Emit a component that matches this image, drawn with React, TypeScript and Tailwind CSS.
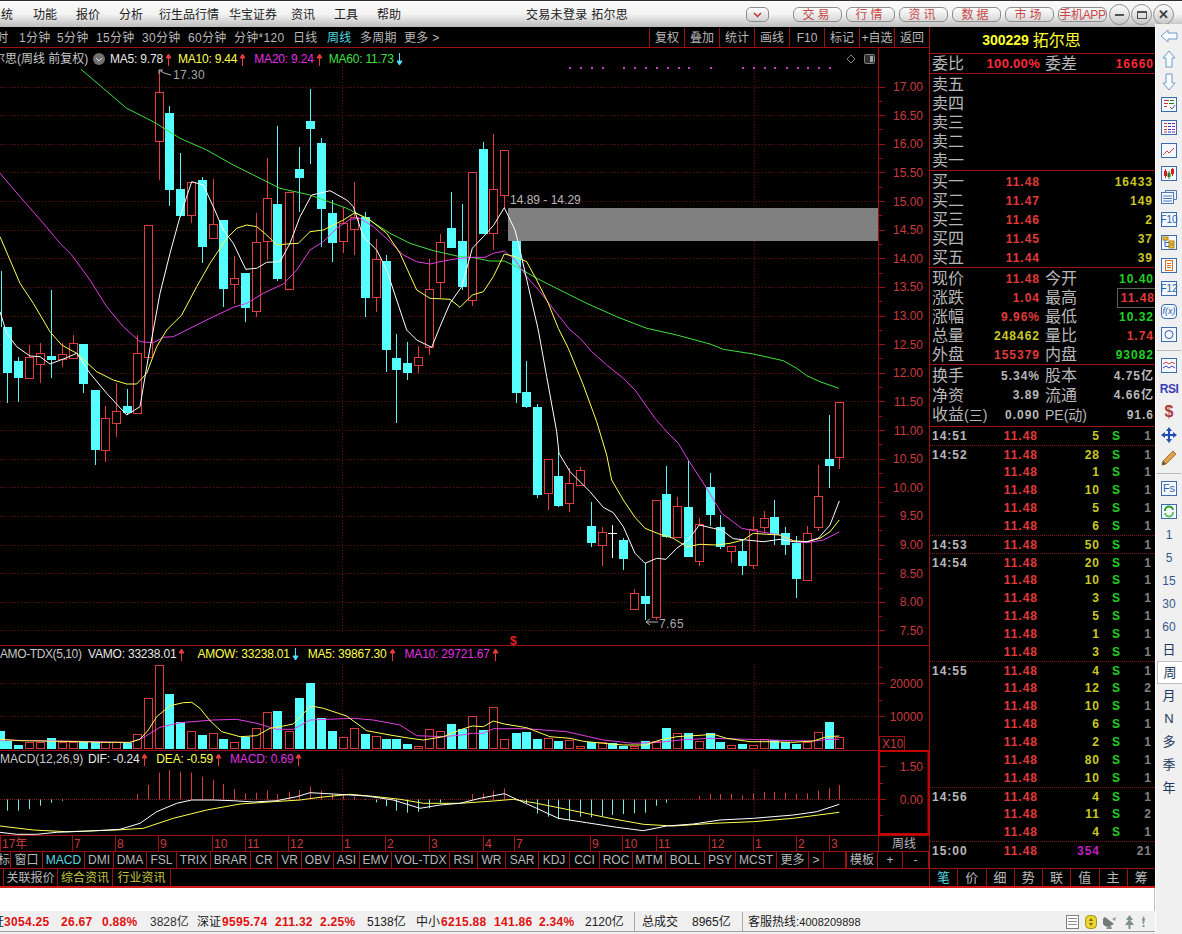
import React from 'react';

// All chart coordinates were read off 3x crops, so they are kept in crop units and scaled here.
const pts = (ox: number, oy: number, a: number[]) => {
  const out: string[] = [];
  for (let i = 0; i < a.length; i += 2) out.push(`${(ox + a[i] / 3).toFixed(1)},${(oy + a[i + 1] / 3).toFixed(1)}`);
  return out;
};

type Candle = [number, number, number, number, number, 'c' | 'r' | 'w'];

// x, wick top, body top, body bottom, wick bottom, kind
const CANDLES_A: Candle[] = [
  [2, 632, 795, 795, 800, 'c'], [22, 800, 800, 940, 1030, 'c'], [55, 890, 903, 953, 1025, 'c'], [88, 855, 892, 955, 955, 'r'],
  [121, 850, 880, 912, 970, 'r'], [152, 690, 888, 900, 955, 'c'], [185, 850, 883, 899, 922, 'r'], [218, 825, 850, 895, 895, 'r'],
  [250, 852, 852, 972, 1000, 'c'], [284, 990, 990, 1170, 1215, 'c'], [314, 1038, 1075, 1170, 1206, 'r'], [347, 968, 1053, 1090, 1130, 'r'],
  [380, 988, 1038, 1060, 1065, 'c'], [412, 825, 880, 1060, 1060, 'r'], [445, 495, 495, 892, 892, 'r'], [476, 30, 97, 245, 360, 'r'],
  [508, 138, 160, 390, 438, 'c'], [541, 280, 388, 468, 470, 'c'], [574, 365, 367, 467, 490, 'r'], [607, 352, 360, 560, 608, 'c'],
  [640, 357, 492, 533, 533, 'r'], [670, 480, 480, 686, 740, 'c'], [703, 588, 655, 673, 732, 'r'], [736, 640, 640, 743, 785, 'c'],
  [769, 460, 545, 752, 772, 'r'], [802, 295, 415, 545, 600, 'r'], [832, 198, 432, 657, 662, 'c'], [866, 397, 397, 688, 688, 'r'],
  [898, 262, 327, 353, 455, 'c'], [931, 88, 183, 207, 312, 'c'], [964, 235, 250, 446, 562, 'c'], [995, 420, 460, 548, 605, 'c'],
  [1028, 440, 490, 545, 580, 'r'], [1061, 365, 472, 508, 585, 'r'], [1094, 455, 470, 713, 772, 'c'], [1127, 538, 597, 710, 755, 'r'],
  [1157, 585, 603, 870, 935, 'c'], [1189, 822, 895, 930, 1088, 'c'], [1222, 847, 910, 938, 960, 'c'], [1255, 858, 892, 916, 940, 'r'],
  [1288, 598, 688, 862, 885, 'r'], [1319, 522, 545, 664, 715, 'r'], [1352, 397, 505, 563, 565, 'c'],
];

const CANDLES_B: Candle[] = [
  [5, 432, 543, 680, 690, 'c'], [37, 337, 337, 720, 738, 'r'], [70, 245, 267, 521, 521, 'c'], [100, 222, 388, 520, 570, 'r'],
  [133, 270, 270, 404, 445, 'r'], [167, 500, 500, 998, 1030, 'c'], [199, 903, 996, 1040, 1045, 'c'],
];

const CANDLES_C: Candle[] = [
  [232, 12, 21, 285, 293, 'c'], [265, 177, 177, 278, 330, 'r'], [295, 155, 228, 318, 320, 'c'], [328, 205, 250, 311, 335, 'r'],
  [361, 200, 211, 257, 257, 'r'], [394, 305, 378, 430, 440, 'c'], [427, 380, 397, 436, 498, 'r'], [457, 375, 400, 401, 473, 'w'],
  [490, 415, 420, 476, 510, 'c'], [523, 568, 580, 628, 628, 'r'], [556, 490, 588, 611, 660, 'c'], [589, 300, 300, 650, 660, 'r'],
  [619, 198, 282, 410, 415, 'c'], [652, 292, 319, 413, 413, 'r'], [685, 180, 321, 470, 470, 'c'], [718, 353, 373, 484, 497, 'r'],
  [751, 220, 261, 344, 378, 'c'], [781, 345, 381, 440, 448, 'c'], [814, 439, 439, 455, 490, 'r'], [847, 420, 453, 497, 524, 'c'],
  [880, 352, 388, 496, 508, 'r'], [913, 333, 355, 382, 400, 'r'], [943, 300, 351, 402, 436, 'c'], [976, 380, 400, 434, 465, 'c'],
  [1009, 408, 428, 537, 593, 'c'], [1042, 378, 400, 542, 542, 'r'], [1075, 195, 289, 383, 393, 'r'], [1108, 45, 177, 197, 263, 'c'],
  [1138, 6, 6, 172, 206, 'r'],
];

const MA5 = [
  ...pts(0, 60, [0, 755, 20, 820, 50, 860, 90, 888, 120, 890, 150, 912, 200, 893, 230, 880, 270, 940, 320, 1000, 380, 1065, 420, 1040, 440, 920, 460, 810, 480, 700, 510, 580, 540, 470, 575, 365, 610, 375, 640, 440, 670, 510, 700, 550, 737, 628, 770, 625, 800, 607, 840, 605, 870, 550, 900, 470, 935, 405, 990, 392, 1040, 420, 1060, 440, 1090, 530, 1130, 570, 1160, 630, 1190, 720, 1220, 810, 1250, 840, 1295, 862, 1320, 800, 1350, 730]),
  ...pts(460, 60, [5, 680, 37, 565, 70, 530, 100, 497, 133, 443, 165, 510, 180, 570, 205, 680, 235, 810, 260, 950]),
  ...pts(460, 400, [290, 95, 297, 160, 330, 215, 390, 275, 430, 322, 460, 338, 490, 380, 525, 460, 555, 490, 590, 475, 618, 478, 650, 445, 685, 420, 718, 375, 760, 385, 785, 390, 820, 416, 860, 420, 910, 425, 960, 418, 1000, 425, 1042, 425, 1075, 415, 1110, 375, 1138, 303]),
].join(' ');

const MA10 = [
  ...pts(0, 60, [0, 530, 30, 600, 60, 670, 100, 730, 150, 815, 185, 855, 230, 880, 290, 935, 340, 960, 380, 972, 410, 972, 440, 940, 470, 860, 500, 810, 545, 765, 590, 680, 630, 610, 680, 535, 710, 505, 740, 495, 770, 500, 800, 525, 830, 555, 860, 552, 895, 550, 930, 515, 970, 510, 1030, 480, 1065, 458, 1110, 480, 1160, 520, 1200, 580, 1250, 690, 1290, 715, 1350, 718]),
  ...pts(460, 60, [0, 742, 37, 705, 70, 695, 100, 650, 133, 582, 165, 590, 200, 605, 230, 660, 265, 730, 295, 805, 325, 865, 370, 975]),
  ...pts(460, 400, [410, 65, 440, 165, 455, 240, 490, 300, 525, 352, 555, 385, 600, 403, 640, 415, 680, 440, 720, 433, 770, 435, 810, 430, 850, 420, 880, 400, 920, 403, 960, 405, 1000, 422, 1040, 425, 1080, 415, 1110, 395, 1138, 360]),
].join(' ');

const MA20 = [
  ...pts(0, 60, [0, 340, 60, 410, 130, 490, 180, 550, 215, 585, 270, 660, 320, 740, 370, 800, 420, 845, 460, 848, 490, 832, 520, 830, 570, 805, 630, 775, 700, 742, 740, 730, 790, 700, 850, 672, 890, 630, 930, 570, 970, 545, 1010, 505, 1050, 478, 1080, 475, 1120, 500, 1170, 545, 1210, 585, 1250, 605, 1290, 612, 1330, 603]),
  ...pts(460, 60, [0, 595, 37, 592, 75, 592, 100, 580, 133, 573, 165, 600, 200, 650, 240, 695, 290, 760, 330, 810, 360, 835, 395, 875, 440, 915, 490, 955, 525, 990]),
  ...pts(460, 400, [585, 55, 620, 95, 655, 130, 685, 180, 740, 265, 785, 340, 845, 385, 900, 395, 960, 405, 1005, 425, 1040, 428, 1090, 420, 1138, 396]),
].join(' ');

const MA60 = [
  ...pts(0, 60, [243, 28, 310, 85, 380, 145, 460, 185, 540, 235, 620, 270, 700, 315, 780, 355, 840, 385, 930, 405, 1040, 445, 1100, 475, 1170, 520, 1230, 550, 1300, 572]),
  ...pts(460, 60, [0, 590, 40, 593, 90, 603, 133, 603, 170, 620, 230, 655, 300, 690, 380, 730, 470, 770, 560, 805, 650, 825, 750, 852, 790, 868, 880, 882, 970, 902, 1010, 925, 1040, 947, 1080, 965, 1136, 985]),
].join(' ');

const VOL_A: [number, number, 'c' | 'r'][] = [
  [0, 272, 'c'], [22, 302, 'c'], [55, 315, 'c'], [88, 305, 'r'], [121, 305, 'r'], [152, 295, 'c'], [185, 307, 'r'], [218, 305, 'r'], [250, 307, 'c'], [284, 307, 'c'], [314, 307, 'r'], [347, 307, 'r'], [380, 308, 'c'], [412, 283, 'r'], [445, 175, 'r'], [476, 76, 'r'], [508, 162, 'c'], [541, 247, 'c'], [574, 274, 'r'], [607, 286, 'c'], [640, 280, 'r'], [670, 297, 'c'], [703, 305, 'r'], [736, 292, 'c'], [769, 265, 'r'], [802, 217, 'r'], [832, 213, 'c'], [866, 272, 'r'], [898, 174, 'c'], [931, 130, 'c'], [964, 234, 'c'], [995, 273, 'c'], [1028, 292, 'r'], [1061, 265, 'r'], [1094, 282, 'c'], [1127, 287, 'r'], [1157, 297, 'c'], [1189, 297, 'c'], [1222, 312, 'c'], [1255, 319, 'r'], [1288, 268, 'r'], [1319, 274, 'r'], [1352, 252, 'c'],
];

const VOL_B: [number, number, 'c' | 'r'][] = [
  [5, 268, 'c'], [37, 229, 'r'], [70, 270, 'c'], [100, 202, 'r'], [133, 298, 'r'], [167, 279, 'c'], [199, 275, 'c'], [232, 297, 'c'], [265, 295, 'r'], [295, 303, 'c'], [328, 301, 'r'], [361, 319, 'r'], [394, 305, 'c'], [427, 307, 'r'], [457, 310, 'c'], [490, 318, 'c'], [523, 319, 'r'], [556, 303, 'c'], [589, 302, 'r'], [619, 265, 'c'], [652, 278, 'r'], [685, 280, 'c'], [718, 304, 'r'], [751, 280, 'c'], [781, 306, 'c'], [814, 314, 'r'], [847, 312, 'c'], [880, 316, 'r'], [913, 296, 'r'], [943, 299, 'c'], [976, 307, 'c'], [1009, 311, 'c'], [1042, 305, 'r'], [1075, 275, 'r'], [1108, 247, 'c'], [1138, 292, 'r'],
];

const VOL_YELLOW = [
  ...pts(0, 640, [0, 298, 60, 302, 120, 303, 240, 305, 300, 307, 390, 307, 420, 298, 445, 270, 470, 230, 510, 197, 550, 188, 575, 187, 600, 205, 630, 242, 665, 275, 720, 290, 770, 287, 810, 265, 850, 258, 880, 252, 910, 220, 935, 198, 970, 205, 1040, 228, 1100, 272, 1170, 285, 1230, 295, 1270, 300, 1330, 290]),
  ...pts(460, 640, [5, 268, 37, 258, 70, 260, 100, 243, 133, 252, 200, 263, 270, 290, 330, 295, 370, 304, 430, 310, 490, 315, 556, 315, 600, 300, 650, 290, 720, 286, 760, 283, 800, 295, 870, 305, 930, 305, 1000, 307, 1060, 303, 1100, 290, 1138, 288]),
].join(' ');

const VOL_MAGENTA = [
  ...pts(0, 640, [0, 300, 120, 302, 300, 305, 390, 308, 430, 293, 480, 262, 540, 248, 640, 240, 710, 238, 770, 250, 830, 268, 880, 268, 930, 240, 1060, 235, 1120, 240, 1200, 255, 1250, 287, 1330, 290]),
  ...pts(460, 640, [5, 285, 37, 280, 70, 280, 100, 266, 200, 266, 320, 275, 430, 300, 520, 310, 600, 307, 660, 300, 750, 295, 860, 298, 1000, 302, 1060, 303, 1108, 298, 1138, 298]),
].join(' ');

// x, bar end; the zero line is at 478 in crop units
const MACD_A: [number, number][] = [
  [22, 512], [55, 512], [88, 507], [121, 497], [152, 488], [185, 482], [412, 462], [445, 435], [476, 398], [508, 390], [541, 395], [574, 398], [607, 410], [640, 420], [670, 432], [703, 447], [736, 460], [769, 458], [802, 452], [832, 462], [866, 455], [898, 450], [931, 440], [964, 452], [995, 462], [1028, 465], [1061, 470], [1094, 480], [1127, 487], [1157, 498], [1189, 512], [1222, 518], [1255, 515], [1288, 505], [1319, 488],
];

const MACD_B: [number, number][] = [
  [37, 462], [70, 460], [100, 452], [133, 445], [199, 490], [232, 520], [265, 530], [295, 538], [328, 540], [361, 530], [394, 532], [427, 528], [457, 525], [490, 522], [523, 520], [556, 518], [589, 497], [619, 488], [718, 468], [751, 462], [781, 462], [814, 462], [847, 466], [880, 460], [913, 456], [943, 456], [976, 458], [1009, 462], [1042, 460], [1075, 452], [1108, 445], [1138, 435],
];

const DIF = [
  ...pts(0, 640, [0, 577, 50, 583, 110, 583, 170, 577, 270, 573, 360, 568, 420, 550, 470, 515, 530, 490, 575, 480, 640, 480, 700, 482, 760, 486, 830, 482, 890, 470, 930, 458, 1000, 462, 1100, 468, 1180, 480, 1260, 505, 1320, 495]),
  ...pts(460, 640, [0, 490, 60, 475, 133, 461, 170, 478, 230, 505, 295, 535, 380, 548, 470, 562, 550, 572, 620, 558, 700, 552, 780, 540, 880, 535, 1000, 525, 1070, 515, 1138, 493]),
].join(' ');

const DEA = [
  ...pts(0, 640, [0, 558, 100, 570, 200, 575, 350, 570, 430, 565, 520, 535, 620, 510, 720, 492, 820, 485, 900, 480, 960, 472, 1050, 463, 1130, 470, 1200, 478, 1270, 490]),
  ...pts(460, 640, [0, 490, 100, 483, 160, 478, 230, 490, 330, 510, 450, 535, 550, 553, 640, 558, 760, 550, 880, 545, 1000, 535, 1138, 517]),
].join(' ');

const PRICE_LABELS = ['17.00', '16.50', '16.00', '15.50', '15.00', '14.50', '14.00', '13.50', '13.00', '12.50', '12.00', '11.50', '11.00', '10.50', '10.00', '9.50', '9.00', '8.50', '8.00', '7.50'];
const SIGNAL_DOTS = [328, 360, 393, 427, 490, 522, 555, 588, 620, 653, 685, 750, 847, 880, 912, 943, 977, 1010, 1042, 1075, 1108];
const priceY = (i: number) => 86.5 + i * 28.63;

const RED_LINE = '#a01010';
const GRID = '#661212';
const AXIS_TEXT = 'text-[12px] fill-[#c83c3c]';

const CandleMark = ({ c, ox, oy }: { c: Candle; ox: number; oy: number }) => {
  const [x, hi, top, bottom, lo, kind] = c;
  const cx = Math.round(ox + x / 3);
  const y = (v: number) => oy + v / 3;
  const line = kind === 'c' ? '#55f5f5' : kind === 'w' ? '#ffffff' : '#e03c3c';
  if (kind === 'w') {
    return (
      <g stroke={line}>
        <line x1={cx + 0.5} x2={cx + 0.5} y1={y(hi)} y2={y(lo)} />
        <line x1={cx - 4} x2={cx + 5} y1={Math.round(y(top)) + 0.5} y2={Math.round(y(top)) + 0.5} />
      </g>
    );
  }
  return (
    <g stroke={line}>
      <line x1={cx + 0.5} x2={cx + 0.5} y1={y(hi)} y2={y(top)} />
      <line x1={cx + 0.5} x2={cx + 0.5} y1={y(bottom)} y2={y(lo)} />
      {kind === 'c' ? (
        <rect x={cx - 4} y={y(top)} width={9} height={(bottom - top) / 3} fill="#55ffff" stroke="none" />
      ) : (
        <rect x={cx - 3.5} y={Math.round(y(top)) + 0.5} width={8} height={Math.round((bottom - top) / 3)} fill="#000000" />
      )}
    </g>
  );
};

const VolBar = ({ x, top, kind, ox }: { x: number; top: number; kind: 'c' | 'r'; ox: number }) => {
  const cx = Math.round(ox + x / 3);
  const y = Math.round(640 + top / 3);
  return kind === 'c' ? (
    <rect x={cx - 4} y={y} width={9} height={749 - y} fill="#55ffff" />
  ) : (
    <rect x={cx - 3.5} y={y + 0.5} width={8} height={749 - y - 1} fill="#000000" stroke="#d83c3c" />
  );
};

const MacdBar = ({ x, end, ox }: { x: number; end: number; ox: number }) => {
  const cx = Math.round(ox + x / 3) + 0.5;
  return <line x1={cx} x2={cx} y1={799.5} y2={640 + end / 3} stroke={end < 478 ? '#d83c3c' : '#7fe8e0'} />;
};

const Arrow = ({ down }: { down?: boolean }) => (
  <svg width="7" height="13" viewBox="0 0 7 13" className="inline-block shrink-0">
    {down ? (
      <path d="M3.5 0V11M1 8L3.5 12L6 8Z" stroke="#55ddff" fill="#55ddff" />
    ) : (
      <path d="M3.5 13V2M1 5L3.5 1L6 5Z" stroke="#e83c3c" fill="#e83c3c" />
    )}
  </svg>
);

const PriceChart = () => (
  <svg width="929" height="597" viewBox="0 48 929 597" className="block overflow-visible">
    {PRICE_LABELS.map((_, i) => (
      <line key={i} x1={0} x2={878} y1={Math.round(priceY(i)) + 0.5} y2={Math.round(priceY(i)) + 0.5} stroke={GRID} strokeDasharray="1 2" />
    ))}
    <line x1={342.5} x2={342.5} y1={64} y2={632} stroke={GRID} strokeDasharray="1 2" />
    <line x1={754.5} x2={754.5} y1={64} y2={632} stroke={GRID} strokeDasharray="1 2" />
    <g shapeRendering="crispEdges">
      {CANDLES_A.map((c, i) => <CandleMark key={i} c={c} ox={0} oy={60} />)}
      {CANDLES_B.map((c, i) => <CandleMark key={i} c={c} ox={460} oy={60} />)}
      {CANDLES_C.map((c, i) => <CandleMark key={i} c={c} ox={460} oy={400} />)}
      <rect x={508} y={208} width={370} height={33} fill="#808080" />
    </g>
    <polyline points={MA60} fill="none" stroke="#40e040" />
    <polyline points={MA20} fill="none" stroke="#e040e0" />
    <polyline points={MA10} fill="none" stroke="#ffff50" />
    <polyline points={MA5} fill="none" stroke="#ffffff" />
    {SIGNAL_DOTS.map((x) => (
      <rect key={x} x={Math.round(460 + x / 3)} y={67} width={2} height={2} fill="#c040c0" />
    ))}
    <path d="M851 55L855 59L851 63L847 59Z" fill="none" stroke="#808080" />
    <rect x={864.5} y={54.5} width={10} height={9} rx={1} fill="#303030" stroke="#808080" />
    <rect x={870} y={56} width={3} height={6} fill="#a0a0a0" />
    <path d="M159 70H163M159 70V74M159 70L164 73L171 75" fill="none" stroke="#b0b0b0" />
    <text x={173} y={79} className="text-[12px] fill-[#a8a8a8]" letterSpacing="0.4">17.30</text>
    <text x={510} y={204} className="text-[12px] fill-[#b8b8b8]">14.89 - 14.29</text>
    <path d="M646 622H658M646 622L650 619M646 622L650 625" fill="none" stroke="#b0b0b0" />
    <text x={659} y={628} className="text-[12px] fill-[#a8a8a8]" letterSpacing="0.4">7.65</text>
    <text x={510} y={645} className="text-[12px] font-bold fill-[#e82020]">$</text>
    <line x1={878.5} x2={878.5} y1={48} y2={645} stroke={RED_LINE} />
    {PRICE_LABELS.map((label, i) => (
      <g key={label}>
        <line x1={879} x2={885} y1={Math.round(priceY(i)) + 0.5} y2={Math.round(priceY(i)) + 0.5} stroke={RED_LINE} />
        <line x1={879} x2={882} y1={Math.round(priceY(i) + 14.3) + 0.5} y2={Math.round(priceY(i) + 14.3) + 0.5} stroke={RED_LINE} />
        <text x={923} y={priceY(i) + 4.5} textAnchor="end" className={AXIS_TEXT}>{label}</text>
      </g>
    ))}
  </svg>
);

const VolumeChart = () => (
  <svg width="929" height="105" viewBox="0 645 929 105" className="block">
    <line x1={0} x2={878} y1={683.5} y2={683.5} stroke={GRID} strokeDasharray="1 2" />
    <line x1={0} x2={878} y1={716.5} y2={716.5} stroke={GRID} strokeDasharray="1 2" />
    <line x1={342.5} x2={342.5} y1={664} y2={750} stroke={GRID} strokeDasharray="1 2" />
    <line x1={754.5} x2={754.5} y1={664} y2={750} stroke={GRID} strokeDasharray="1 2" />
    <g shapeRendering="crispEdges">
      {VOL_A.map(([x, top, kind], i) => <VolBar key={i} x={x} top={top} kind={kind} ox={0} />)}
      {VOL_B.map(([x, top, kind], i) => <VolBar key={i} x={x} top={top} kind={kind} ox={460} />)}
    </g>
    <polyline points={VOL_MAGENTA} fill="none" stroke="#e040e0" />
    <polyline points={VOL_YELLOW} fill="none" stroke="#ffff50" />
    <line x1={878.5} x2={878.5} y1={645} y2={750} stroke={RED_LINE} />
    <line x1={879} x2={885} y1={683.5} y2={683.5} stroke={RED_LINE} />
    <line x1={879} x2={885} y1={716.5} y2={716.5} stroke={RED_LINE} />
    <line x1={879} x2={882} y1={700.5} y2={700.5} stroke={RED_LINE} />
    <line x1={879} x2={882} y1={667.5} y2={667.5} stroke={RED_LINE} />
    <text x={923} y={688} textAnchor="end" className={AXIS_TEXT}>20000</text>
    <text x={923} y={721} textAnchor="end" className={AXIS_TEXT}>10000</text>
    <rect x={879.5} y={736.5} width={25} height={14} fill="#000000" stroke={RED_LINE} />
    <text x={882} y={748} className="text-[12px] fill-[#c83c3c]">X10</text>
  </svg>
);

const MacdChart = () => (
  <svg width="929" height="85" viewBox="0 750 929 85" className="block">
    <line x1={0} x2={878} y1={799.5} y2={799.5} stroke="#801818" strokeDasharray="1 1" />
    <line x1={342.5} x2={342.5} y1={770} y2={835} stroke={GRID} strokeDasharray="1 2" />
    <line x1={754.5} x2={754.5} y1={770} y2={835} stroke={GRID} strokeDasharray="1 2" />
    {MACD_A.map(([x, end], i) => <MacdBar key={i} x={x} end={end} ox={0} />)}
    {MACD_B.map(([x, end], i) => <MacdBar key={i} x={x} end={end} ox={460} />)}
    <polyline points={DEA} fill="none" stroke="#ffff50" />
    <polyline points={DIF} fill="none" stroke="#ffffff" />
    <rect x={879} y={751} width={49.5} height={83} fill="#000000" stroke="#c80000" strokeWidth={2} />
    <line x1={880} x2={886} y1={766.5} y2={766.5} stroke={RED_LINE} />
    <line x1={880} x2={886} y1={799.5} y2={799.5} stroke={RED_LINE} />
    <line x1={880} x2={883} y1={783.5} y2={783.5} stroke={RED_LINE} />
    <line x1={880} x2={883} y1={815.5} y2={815.5} stroke={RED_LINE} />
    <text x={923} y={771} textAnchor="end" className={AXIS_TEXT}>1.50</text>
    <text x={923} y={804} textAnchor="end" className={AXIS_TEXT}>0.00</text>
  </svg>
);

const DATE_TICKS: [number, string][] = [[0, '17年'], [72, '7'], [115, '8'], [158, '9'], [212, '10'], [245, '11'], [288, '12'], [342, '1'], [385, '2'], [429, '3'], [483, '4'], [514, '7'], [590, '9'], [622, '10'], [656, '11'], [709, '12'], [753, '1'], [796, '2'], [829, '3']];

const DateAxis = () => (
  <svg width="878" height="16" viewBox="0 835 878 16" className="block">
    {DATE_TICKS.map(([x, label]) => (
      <g key={`${x}${label}`}>
        <line x1={x + 0.5} x2={x + 0.5} y1={835} y2={851} stroke={RED_LINE} />
        <text x={x + 2} y={847} className="text-[12px] fill-[#c83c3c]">{label}</text>
      </g>
    ))}
  </svg>
);

const MENU = [
  { label: '系统', cls: '-ml-[11px] w-[44px]' },
  { label: '功能', cls: 'w-[43px]' },
  { label: '报价', cls: 'w-[43px]' },
  { label: '分析', cls: 'w-[40px]' },
  { label: '衍生品行情', cls: 'w-[70px]' },
  { label: '华宝证券', cls: 'w-[62px]' },
  { label: '资讯', cls: 'w-[43px]' },
  { label: '工具', cls: 'w-[43px]' },
  { label: '帮助', cls: 'w-[43px]' },
];

const PERIODS = [
  { label: '分时', cls: '-ml-[16px] w-[35px]' },
  { label: '1分钟', cls: 'w-[38px]' },
  { label: '5分钟', cls: 'w-[39px]' },
  { label: '15分钟', cls: 'w-[46px]' },
  { label: '30分钟', cls: 'w-[46px]' },
  { label: '60分钟', cls: 'w-[46px]' },
  { label: '分钟*120', cls: 'w-[59px]' },
  { label: '日线', cls: 'w-[34px]' },
  { label: '周线', cls: 'w-[33px] text-[#54d8e0]' },
  { label: '多周期', cls: 'w-[44px]' },
  { label: '更多 >', cls: 'w-[40px]' },
];

const CHART_TOOLS = ['复权', '叠加', '统计', '画线', 'F10', '标记', '+自选', '返回'];

const INDICATORS = [
  { label: '标', cls: 'w-[11px] justify-end' },
  { label: '窗口', cls: 'w-[32px]' },
  { label: 'MACD', cls: 'w-[42px] text-[#54d8e0]' },
  { label: 'DMI', cls: 'w-[29px]' },
  { label: 'DMA', cls: 'w-[33px]' },
  { label: 'FSL', cls: 'w-[30px]' },
  { label: 'TRIX', cls: 'w-[34px]' },
  { label: 'BRAR', cls: 'w-[40px]' },
  { label: 'CR', cls: 'w-[27px]' },
  { label: 'VR', cls: 'w-[24px]' },
  { label: 'OBV', cls: 'w-[32px]' },
  { label: 'ASI', cls: 'w-[26px]' },
  { label: 'EMV', cls: 'w-[32px]' },
  { label: 'VOL-TDX', cls: 'w-[58px]' },
  { label: 'RSI', cls: 'w-[28px]' },
  { label: 'WR', cls: 'w-[28px]' },
  { label: 'SAR', cls: 'w-[33px]' },
  { label: 'KDJ', cls: 'w-[31px]' },
  { label: 'CCI', cls: 'w-[30px]' },
  { label: 'ROC', cls: 'w-[33px]' },
  { label: 'MTM', cls: 'w-[33px]' },
  { label: 'BOLL', cls: 'w-[39px]' },
  { label: 'PSY', cls: 'w-[31px]' },
  { label: 'MCST', cls: 'w-[41px]' },
  { label: '更多', cls: 'w-[32px]' },
  { label: '>', cls: 'w-[15px]' },
  { label: '', cls: 'w-[23px] border-r-2' },
  { label: '模板', cls: 'w-[31px]' },
  { label: '+', cls: 'w-[25px]' },
  { label: '-', cls: 'w-[26px]' },
];

const TRADES: { time?: string; vol: number; count: number }[] = [
  { time: '14:51', vol: 5, count: 1 }, { time: '14:52', vol: 28, count: 1 }, { vol: 1, count: 1 }, { vol: 10, count: 1 }, { vol: 5, count: 1 }, { vol: 6, count: 1 },
  { time: '14:53', vol: 50, count: 1 }, { time: '14:54', vol: 20, count: 1 }, { vol: 10, count: 1 }, { vol: 3, count: 1 }, { vol: 5, count: 1 }, { vol: 1, count: 1 }, { vol: 3, count: 1 },
  { time: '14:55', vol: 4, count: 1 }, { vol: 12, count: 2 }, { vol: 10, count: 1 }, { vol: 6, count: 1 }, { vol: 2, count: 1 }, { vol: 80, count: 1 }, { vol: 10, count: 1 },
  { time: '14:56', vol: 4, count: 1 }, { vol: 11, count: 2 }, { vol: 4, count: 1 },
];

const NUM = 'font-bold text-[12px] tracking-[1px]';
const RED = 'text-[#e03a3a]';
const YELLOW = 'text-[#c8c828]';
const GREEN = 'text-[#20d020]';
const GREY = 'text-[#b8b8b8]';

const Cn = ({ children, cls = '' }: { children: React.ReactNode; cls?: string }) => (
  <span className={`text-[16px] leading-[19px] text-[#b8b8b8] ${cls}`}>{children}</span>
);

const QuoteRow = ({ a, av, ac, b, bv, bc, boxed }: { a: React.ReactNode; av: string; ac: string; b: React.ReactNode; bv: string; bc: string; boxed?: boolean }) => (
  <div className="flex h-[19px] items-center">
    <div className="flex w-[110px] items-center justify-between pl-[2px]">
      <Cn>{a}</Cn>
      <span className={`${NUM} ${ac}`}>{av}</span>
    </div>
    <div className="ml-[5px] flex w-[110px] items-center justify-between">
      <Cn>{b}</Cn>
      {boxed ? (
        <span className={`${NUM} ${bc} -mr-[2px] border border-[#606060] pr-[1px] pl-[3px]`}>{bv}</span>
      ) : (
        <span className={`${NUM} ${bc} pr-[1px]`}>{bv}</span>
      )}
    </div>
  </div>
);

const LevelRow = ({ label, price, qty }: { label: string; price?: string; qty?: string }) => (
  <div className="flex h-[19px] items-center pl-[2px]">
    <Cn cls="w-[58px]">{label}</Cn>
    <span className={`${NUM} ${RED} w-[50px] text-right`}>{price}</span>
    <span className={`${NUM} ${YELLOW} w-[113px] text-right`}>{qty}</span>
  </div>
);

const TradeRow = ({ time, vol, count, first }: { time?: string; vol: number; count: number; first: boolean }) => (
  <div className={`flex h-[18px] items-center ${time && !first ? 'border-t border-dotted border-[#801818]' : ''}`}>
    <span className={`${NUM} ${GREY} w-[60px] pl-[2px]`}>{time}</span>
    <span className={`${NUM} ${RED} w-[48px] text-right`}>11.48</span>
    <span className={`${NUM} ${YELLOW} w-[62px] text-right`}>{vol}</span>
    <span className={`${NUM} ${GREEN} w-[32px] text-center tracking-normal`}>S</span>
    <span className={`${NUM} text-[#808080] w-[20px] text-right`}>{count}</span>
  </div>
);

const LegendItem = ({ text, cls, arrow }: { text: string; cls: string; arrow: 'up' | 'down' }) => (
  <span className={`flex items-center gap-[2px] tracking-[-0.2px] ${cls}`}>
    {text}
    <Arrow down={arrow === 'down'} />
  </span>
);

const TitleButton = ({ label, cls = 'tracking-[3px]' }: { label: string; cls?: string }) => (
  <div className={`flex h-[15px] w-[49px] items-center justify-center rounded-[6px] border border-[#8c8c8c] bg-linear-to-b from-[#ffffff] to-[#d8d8d8] text-[12px] text-[#c84848] ${cls}`}>
    {label}
  </div>
);

const WindowButton = ({ children }: { children: React.ReactNode }) => (
  <div className="flex size-[21px] items-center justify-center rounded-full border border-[#8c8c8c] bg-linear-to-b from-[#ffffff] to-[#c8c8c8]">
    {children}
  </div>
);

const BlockArrow = ({ d }: { d: string }) => (
  <svg width="20" height="18" viewBox="0 0 20 18"><path d={d} fill="#f8fbff" stroke="#6e9ccc" /></svg>
);

const Box = ({ children, cls = 'rounded-none' }: { children: React.ReactNode; cls?: string }) => (
  <div className={`flex h-[15px] w-[16px] items-center justify-center border border-[#3a6cb4] bg-[#f4f8ff] text-[#2f5fae] ${cls}`}>{children}</div>
);

const Glyph = ({ children }: { children: React.ReactNode }) => (
  <svg width="14" height="13" viewBox="0 0 14 13">{children}</svg>
);

const TOOL_ICONS: React.ReactNode[] = [
  <BlockArrow d="M2 9L9 3V6H18V12H9V15Z" />,
  <BlockArrow d="M10 1L16 8H13V17H7V8H4Z" />,
  <BlockArrow d="M10 17L16 10H13V1H7V10H4Z" />,
  <Box><Glyph><path d="M2 2.5H7M2 5.5H6M2 8.5H5" stroke="#d03030" /><path d="M8 2.5H12M7 5.5H12" stroke="#208020" /><path d="M8 9L10 11L13 7" stroke="#606060" fill="none" /></Glyph></Box>,
  <Box><Glyph><path d="M2 2.5H5M2 5.5H5M2 8.5H5M2 11H5" stroke="#d03030" /><path d="M6 2.5H9M6 5.5H9M6 8.5H9M6 11H9" stroke="#3030c0" /><path d="M10 2.5H13M10 5.5H13M10 8.5H13M10 11H13" stroke="#a02090" /></Glyph></Box>,
  <Box><Glyph><path d="M1 11L5 7L7 9L12 4" stroke="#d04040" fill="none" /></Glyph></Box>,
  <Box><Glyph><path d="M3.5 2V11M10.5 1V9" stroke="#d02020" /><path d="M7 4V12" stroke="#208020" /><rect x="2" y="4" width="3" height="5" fill="#d02020" /><rect x="5.5" y="6" width="3" height="4" fill="#208020" /><rect x="9" y="2" width="3" height="5" fill="#d02020" /></Glyph></Box>,
  <svg width="18" height="16" viewBox="0 0 18 16"><path d="M5.5 3.5V1.5H16.5V10.5H14" fill="none" stroke="#4a78b8" /><rect x="1.5" y="3.5" width="12" height="11" fill="#f4f8ff" stroke="#4a78b8" /><path d="M3 7H12M3 9.5H12M3 12H12" stroke="#4a78b8" /></svg>,
  <Box><span className="text-[10px] leading-none">F10</span></Box>,
  <Box><Glyph><rect x="1" y="1" width="5" height="3" fill="#f0c030" stroke="#b08010" /><rect x="7" y="5" width="5" height="3" fill="#f0c030" stroke="#b08010" /><rect x="7" y="9" width="5" height="3" fill="#f0c030" stroke="#b08010" /><path d="M3 4V10.5H7M3 6.5H7" stroke="#3a6cb4" fill="none" /></Glyph></Box>,
  <Box><Glyph><rect x="3.5" y="1.5" width="7" height="10" fill="#ffffff" stroke="#e07020" /><path d="M5 4.5H9M5 6.5H9M5 8.5H9" stroke="#e07020" /></Glyph></Box>,
  <Box><span className="text-[10px] leading-none">F12</span></Box>,
  <Box cls="rounded-[4px]"><span className="text-[9px] italic leading-none">f(x)</span></Box>,
  <Box><Glyph><circle cx="7" cy="6.5" r="4" fill="none" stroke="#2f5fae" /></Glyph></Box>,
];

const TOOL_ICONS_B: React.ReactNode[] = [
  <Box><Glyph><path d="M1 5L4 3L7 5L10 3L13 5" stroke="#d04040" fill="none" /><path d="M1 9L4 7L7 9L10 7L13 9" stroke="#3a3ac0" fill="none" /></Glyph></Box>,
  <span className="text-[12px] font-bold leading-none tracking-[-0.5px] text-[#3c3cb8]">RSI</span>,
  <span className="text-[16px] font-bold leading-none text-[#a83c3c]">$</span>,
  <svg width="18" height="18" viewBox="0 0 18 18"><path d="M9 1L12 5H10V8H13V6L17 9L13 12V10H10V13H12L9 17L6 13H8V10H5V12L1 9L5 6V8H8V5H6Z" fill="#1f4fb4" /></svg>,
  <svg width="18" height="18" viewBox="0 0 18 18"><path d="M13 2L16 5L6 15L2 16L3 12Z" fill="#e0a050" stroke="#a07030" /><path d="M3 12L6 15L2 16Z" fill="#605040" /></svg>,
];

const PERIOD_BAR = ['1', '5', '15', '30', '60'];
const PERIOD_CJK = ['日', '周', '月', 'N', '多', '季', '年'];

const ToolRow = ({ children, cls = '' }: { children: React.ReactNode; cls?: string }) => (
  <div className={`flex h-[23px] shrink-0 items-center justify-center ${cls}`}>{children}</div>
);

const ToolDivider = () => (
  <div className="flex h-[8px] shrink-0 items-center px-[1px]"><div className="h-px w-full bg-[#b8b8b8]" /></div>
);

const Toolbar = () => (
  <div className="-mt-[3px] flex w-[27px] flex-col border-l border-[#ffffff] bg-[#f0f0f0]">
    {TOOL_ICONS.map((icon, i) => <ToolRow key={i}>{icon}</ToolRow>)}
    <ToolDivider />
    {TOOL_ICONS_B.map((icon, i) => <ToolRow key={i}>{icon}</ToolRow>)}
    <ToolDivider />
    <ToolRow><Box><span className="text-[11px] leading-none">Fs</span></Box></ToolRow>
    <ToolRow><Box><Glyph><path d="M3 6A4 4 0 0 1 11 5" stroke="#30a030" strokeWidth="2" fill="none" /><path d="M11 7A4 4 0 0 1 3 8" stroke="#60c060" strokeWidth="2" fill="none" /></Glyph></Box></ToolRow>
    {PERIOD_BAR.map((p) => <ToolRow key={p} cls="text-[12px] text-[#34588c]">{p}</ToolRow>)}
    {PERIOD_CJK.map((p) => (
      <ToolRow key={p} cls={`text-[13px] text-[#203860] ${p === '周' ? 'border border-r-0 border-[#c0c0c0] bg-[#ffffff] ml-[1px]' : ''}`}>{p}</ToolRow>
    ))}
  </div>
);

const StatusNum = ({ children, cls }: { children: React.ReactNode; cls: string }) => (
  <span className={`text-[12px] font-bold tracking-[0.3px] text-[#e01010] ${cls}`}>{children}</span>
);

const StatusText = ({ children, cls }: { children: React.ReactNode; cls: string }) => (
  <span className={`text-[12px] text-[#202020] ${cls}`}>{children}</span>
);

const StatusBar = () => (
  <div className="flex h-[21px] items-center overflow-hidden border-b border-[#a0a0a0] bg-[#f0f0f0] pt-[1px]">
    <StatusText cls="-ml-[8px] w-[12px]">证</StatusText>
    <StatusNum cls="w-[57px]">3054.25</StatusNum>
    <StatusNum cls="w-[41px]">26.67</StatusNum>
    <StatusNum cls="w-[48px]">0.88%</StatusNum>
    <StatusText cls="w-[47px] text-[#303030]">3828亿</StatusText>
    <StatusText cls="w-[25px]">深证</StatusText>
    <StatusNum cls="w-[53px]">9595.74</StatusNum>
    <StatusNum cls="w-[45px]">211.32</StatusNum>
    <StatusNum cls="w-[47px]">2.25%</StatusNum>
    <StatusText cls="w-[49px]">5138亿</StatusText>
    <StatusText cls="w-[25px]">中小</StatusText>
    <StatusNum cls="w-[53px]">6215.88</StatusNum>
    <StatusNum cls="w-[45px]">141.86</StatusNum>
    <StatusNum cls="w-[46px]">2.34%</StatusNum>
    <StatusText cls="w-[49px]">2120亿</StatusText>
    <div className="mr-[7px] h-full border-l border-[#a8a8a8]" />
    <StatusText cls="w-[50px]">总成交</StatusText>
    <StatusText cls="w-[50px]">8965亿</StatusText>
    <div className="mr-[5px] h-full border-l border-[#a8a8a8]" />
    <StatusText cls="w-[200px] whitespace-nowrap">客服热线:<span className="text-[11px]">4008209898</span></StatusText>
    <div className="ml-[118px] flex items-center gap-[6px]">
      <svg width="13" height="14" viewBox="0 0 13 14"><rect x="0.5" y="0.5" width="12" height="13" fill="#ffffff" stroke="#808080" /><path d="M2 3.5H11M2 6.5H11M2 9.5H11" stroke="#909090" /></svg>
      <svg width="12" height="14" viewBox="0 0 12 14"><rect x="0.5" y="0.5" width="11" height="13" rx="4" fill="#e8d830" stroke="#a09020" /><path d="M6 3L8 6H4ZM6 11L8 8H4Z" fill="#806010" /></svg>
      <svg width="15" height="14" viewBox="0 0 15 14"><path d="M2 2L11 9L7 11A5 5 0 0 1 2 2Z" fill="#707878" /><path d="M9 4L13 2L12 6Z" fill="#909898" /><path d="M5 11L3 14H9L8 11Z" fill="#8a9090" /></svg>
      <svg width="11" height="14" viewBox="0 0 11 14"><path d="M5.5 0L9 5H2ZM5.5 4L10 10H1ZM4.5 10H6.5V14H4.5Z" fill="#809088" /></svg>
      <svg width="5" height="14" viewBox="0 0 5 14"><path d="M2.5 1L4 4L3 9H2L1 4Z" fill="#8a9a90" /><rect x="1.5" y="10" width="2" height="2" fill="#8a9a90" /></svg>
    </div>
  </div>
);

const App: React.FC = () => {
  return (
    <div className="flex h-[934px] w-[1182px] flex-col overflow-hidden bg-[#f0f0f0] font-['Liberation_Sans','Noto_Sans_CJK_SC',sans-serif]">
      {/* Title bar */}
      <div className="flex h-[27px] shrink-0 items-center border-t border-[#303030] bg-linear-to-b from-[#fafafa] via-[#f4f4f4] to-[#bcbcbc] pt-[1px] text-[12px] text-[#202020]">
        <div className="flex w-[526px] items-center">
          {MENU.map((m) => (
            <span key={m.label} className={`shrink-0 ${m.cls}`}>{m.label}</span>
          ))}
        </div>
        <span className="w-[220px] tracking-[0.3px]">交易未登录 拓尔思</span>
        <div className="mr-[24px] flex h-[15px] w-[23px] items-center justify-center rounded-[5px] border border-[#8c8c8c] bg-linear-to-b from-[#ffffff] to-[#d0d0d0]">
          <svg width="9" height="6" viewBox="0 0 9 6"><path d="M1 1L4.5 4.5L8 1" fill="none" stroke="#c03030" strokeWidth="1.5" /></svg>
        </div>
        <div className="flex items-center gap-[4px]">
          <TitleButton label="交易" />
          <TitleButton label="行情" />
          <TitleButton label="资讯" />
          <TitleButton label="数据" />
          <TitleButton label="市场" />
          <TitleButton label="手机APP" cls="tracking-[-0.3px]" />
        </div>
        <div className="ml-[2px] flex gap-[1px]">
          <WindowButton><div className="h-[2px] w-[9px] bg-[#505050]" /></WindowButton>
          <WindowButton><div className="h-[8px] w-[10px] border border-t-2 border-[#505050]" /></WindowButton>
          <WindowButton><span className="text-[13px] font-bold leading-none text-[#404040]">✕</span></WindowButton>
        </div>
      </div>

      <div className="flex min-h-0 flex-1">
        <div className="flex w-[1155px] shrink-0 flex-col">
          <div className="flex h-[861px] shrink-0 border-b-2 border-[#d01818] bg-[#000000]">
            {/* Left column: charts */}
            <div className="flex w-[930px] shrink-0 flex-col overflow-hidden border-r border-[#a01010]">
              <div className="flex h-[21px] shrink-0 items-center justify-between border-b border-[#a01010] pt-[1px] text-[12px] tracking-[0.3px] text-[#b8b8b8]">
                <div className="flex items-center">
                  {PERIODS.map((p) => (
                    <span key={p.label} className={`shrink-0 whitespace-nowrap ${p.cls}`}>{p.label}</span>
                  ))}
                </div>
                <div className="flex h-full">
                  {CHART_TOOLS.map((t) => (
                    <span key={t} className="flex w-[35px] items-center justify-center border-l border-[#a01010] tracking-normal">{t}</span>
                  ))}
                </div>
              </div>

              <div className="relative h-[597px] shrink-0">
                <PriceChart />
                <div className="absolute left-0 top-[3px] flex h-[16px] items-center text-[12px] text-[#e8e8e8]">
                  <span className="-ml-[7px] w-[100px] whitespace-nowrap text-[#c8c8c8]">尔思(周线 前复权)</span>
                  <span className="mr-[5px] flex size-[12px] items-center justify-center rounded-full bg-[#707070]">
                    <svg width="8" height="5" viewBox="0 0 8 5"><path d="M1 1L4 4L7 1" fill="none" stroke="#e0e0e0" /></svg>
                  </span>
                  <LegendItem text="MA5: 9.78" cls="mr-[6px]" arrow="up" />
                  <LegendItem text="MA10: 9.44" cls="mr-[8px] text-[#ffff50]" arrow="up" />
                  <LegendItem text="MA20: 9.24" cls="mr-[6px] text-[#e030e0]" arrow="up" />
                  <LegendItem text="MA60: 11.73" cls="text-[#40e040]" arrow="down" />
                </div>
              </div>

              <div className="relative h-[105px] shrink-0 border-t border-[#a01010]">
                <div className="-mt-px"><VolumeChart /></div>
                <div className="absolute left-0 top-0 flex h-[16px] items-center text-[12px] text-[#e8e8e8]">
                  <span className="w-[88px] whitespace-nowrap tracking-[-0.4px] text-[#c8c8c8]">AMO-TDX(5,10)</span>
                  <LegendItem text="VAMO: 33238.01" cls="mr-[12px]" arrow="up" />
                  <LegendItem text="AMOW: 33238.01" cls="mr-[9px] text-[#ffff50]" arrow="down" />
                  <LegendItem text="MA5: 39867.30" cls="mr-[9px] text-[#ffff50]" arrow="up" />
                  <LegendItem text="MA10: 29721.67" cls="text-[#e030e0]" arrow="up" />
                </div>
              </div>

              <div className="relative h-[85px] shrink-0 border-t border-[#a01010]">
                <div className="-mt-px"><MacdChart /></div>
                <div className="absolute left-0 top-0 flex h-[16px] items-center text-[12px] text-[#e8e8e8]">
                  <span className="w-[88px] whitespace-nowrap text-[#c8c8c8]">MACD(12,26,9)</span>
                  <LegendItem text="DIF: -0.24" cls="mr-[8px]" arrow="up" />
                  <LegendItem text="DEA: -0.59" cls="mr-[8px] text-[#ffff50]" arrow="up" />
                  <LegendItem text="MACD: 0.69" cls="text-[#e030e0]" arrow="up" />
                </div>
              </div>

              <div className="flex h-[17px] shrink-0 border-y border-[#a01010]">
                <div className="w-[878px]"><DateAxis /></div>
                <div className="flex flex-1 items-center justify-center border-l border-[#a01010] text-[12px] text-[#b8b8b8]">周线</div>
              </div>

              <div className="flex h-[17px] shrink-0 border-b border-[#a01010] text-[12px] text-[#b8b8b8]">
                {INDICATORS.map((t, i) => (
                  <span key={`${t.label}${i}`} className={`flex shrink-0 items-center justify-center overflow-hidden whitespace-nowrap border-r border-[#a01010] ${t.cls}`}>{t.label}</span>
                ))}
              </div>

              <div className="flex h-[17px] shrink-0 pl-[3px] text-[12px]">
                <span className="flex w-[55px] items-center justify-center border-x border-[#a01010] text-[#b8b8b8]">关联报价</span>
                <span className="flex w-[55px] items-center justify-center border-r border-[#a01010] text-[#c8c840]">综合资讯</span>
                <span className="flex w-[58px] items-center justify-center border-r border-[#a01010] text-[#c8c840]">行业资讯</span>
              </div>
            </div>

            {/* Right column: quote panel */}
            <div className="flex w-[225px] shrink-0 flex-col">
              <div className="flex h-[27px] items-center justify-center gap-[4px] border-b border-[#a01010] pt-[1px] pr-[22px] font-bold text-[#ffff30]">
                <span className="text-[14px]">300229</span>
                <span className="text-[16px] font-normal">拓尔思</span>
              </div>
              <div className="flex h-[20px] items-center border-b border-[#a01010]">
                <div className="flex w-[110px] items-center justify-between pl-[2px]">
                  <Cn>委比</Cn>
                  <span className="text-[13px] font-bold tracking-[0.3px] text-[#ff2838]">100.00%</span>
                </div>
                <div className="ml-[5px] flex w-[110px] items-center justify-between">
                  <Cn>委差</Cn>
                  <span className={`${NUM} pr-[1px] text-[#ff2838]`}>16660</span>
                </div>
              </div>
              <div className="flex flex-col border-b border-[#a01010] pt-[1px]">
                {['卖五', '卖四', '卖三', '卖二', '卖一'].map((l) => <LevelRow key={l} label={l} />)}
              </div>
              <div className="flex flex-col border-b border-[#a01010] pt-[1px]">
                <LevelRow label="买一" price="11.48" qty="16433" />
                <LevelRow label="买二" price="11.47" qty="149" />
                <LevelRow label="买三" price="11.46" qty="2" />
                <LevelRow label="买四" price="11.45" qty="37" />
                <LevelRow label="买五" price="11.44" qty="39" />
              </div>
              <div className="flex flex-col border-b border-[#a01010] pt-[1px]">
                <QuoteRow a="现价" av="11.48" ac={RED} b="今开" bv="10.40" bc={GREEN} />
                <QuoteRow a="涨跌" av="1.04" ac={RED} b="最高" bv="11.48" bc={RED} boxed />
                <QuoteRow a="涨幅" av="9.96%" ac={RED} b="最低" bv="10.32" bc={GREEN} />
                <QuoteRow a="总量" av="248462" ac={YELLOW} b="量比" bv="1.74" bc={RED} />
                <QuoteRow a="外盘" av="155379" ac={RED} b="内盘" bv="93082" bc={GREEN} />
              </div>
              <div className="flex h-[62px] shrink-0 flex-col gap-[0.5px] border-b border-[#a01010] pt-[1px]">
                <QuoteRow a="换手" av="5.34%" ac={GREY} b="股本" bv="4.75亿" bc={GREY} />
                <QuoteRow a="净资" av="3.89" ac={GREY} b="流通" bv="4.66亿" bc={GREY} />
                <QuoteRow a={<span>收益<span className="text-[14px]">(三)</span></span>} av="0.090" ac={GREY} b={<span className="text-[14px]">PE(动)</span>} bv="91.6" bc={GREY} />
              </div>
              <div className="flex flex-1 flex-col">
                {TRADES.map((t, i) => <TradeRow key={i} time={t.time} vol={t.vol} count={t.count} first={i === 0} />)}
                <div className="flex h-[18px] items-center border-t border-dotted border-[#801818]">
                  <span className={`${NUM} ${GREY} w-[60px] pl-[2px]`}>15:00</span>
                  <span className={`${NUM} ${RED} w-[48px] text-right`}>11.48</span>
                  <span className={`${NUM} w-[62px] text-right text-[#c020c0]`}>354</span>
                  <span className="w-[32px]" />
                  <span className={`${NUM} w-[20px] text-right text-[#808080]`}>21</span>
                </div>
              </div>
              <div className="flex h-[18px] border-t border-[#a01010] text-[13px] text-[#b8b8b8]">
                {['笔', '价', '细', '势', '联', '值', '主', '筹'].map((t, i) => (
                  <span key={t} className={`flex flex-1 items-center justify-center ${i ? 'border-l border-[#a01010]' : 'text-[#54d8e0]'}`}>{t}</span>
                ))}
              </div>
            </div>
          </div>
          <div className="h-[23px] shrink-0 border-r border-[#c0c0c0] bg-[#ffffff]" />
          <StatusBar />
        </div>
        <Toolbar />
      </div>
    </div>
  );
};

export default App;
